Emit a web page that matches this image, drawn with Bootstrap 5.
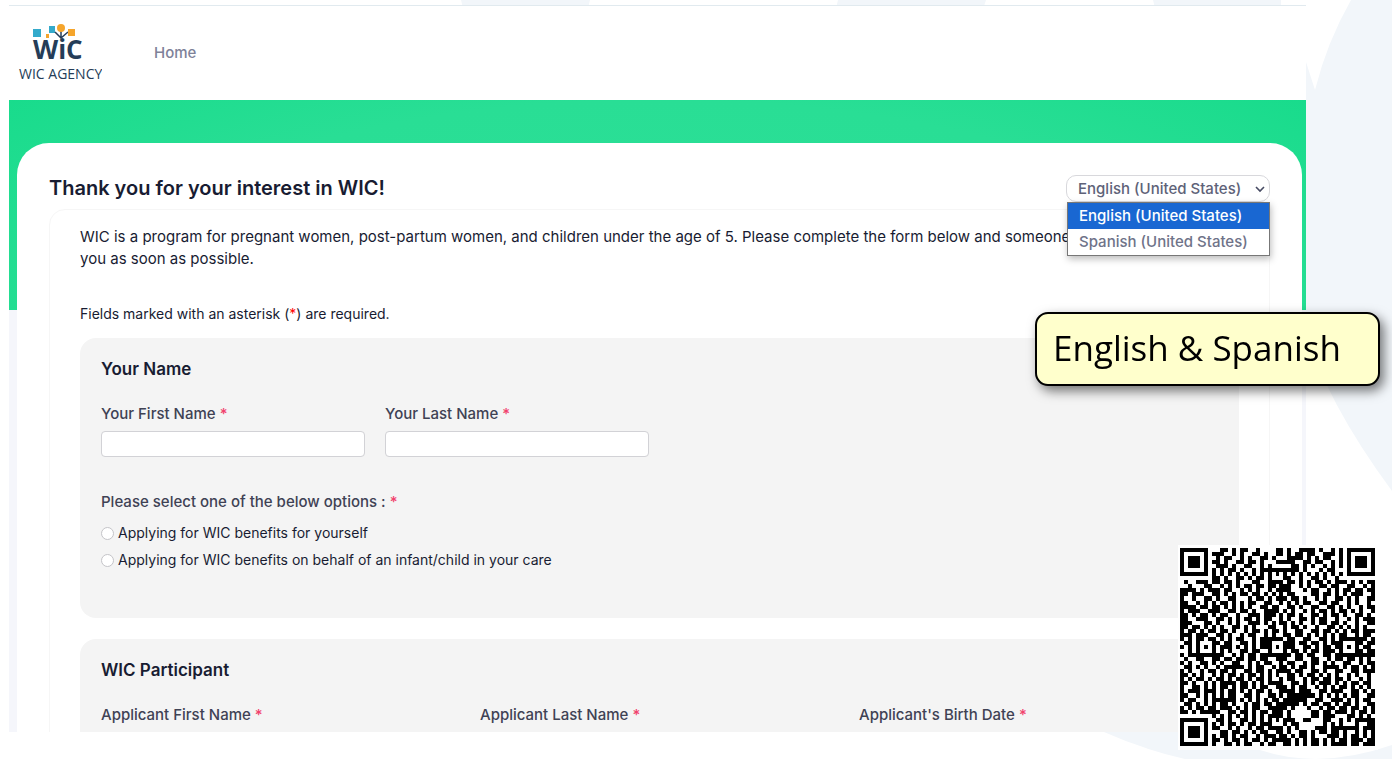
<!DOCTYPE html>
<html lang="en">
<head>
<meta charset="utf-8">
<meta name="viewport" content="width=device-width, initial-scale=1">
<title>WIC Agency</title>
<link href="https://cdn.jsdelivr.net/npm/bootstrap@5.3.0/dist/css/bootstrap.min.css" rel="stylesheet">
<style>
  body { font-family: Inter, "Liberation Sans", sans-serif; font-size: 15px; color: #181c32; background: #fff; min-height: 100vh; overflow: hidden; }
  .backdrop-art { position: fixed; inset: 0; width: 100%; height: 100%; z-index: -1; }
  .app-window { margin: 5px 86px 0 9px; height: calc(100vh - 32px); overflow: hidden; background: #f5f6fb; border-top: 1px solid #e1eaef; }
  .site-header { height: 94px; padding: 0 9px; gap: 52px; }
  .site-header a { color: #7e8299; font-weight: 500; }
  .hero { height: 210px; background: radial-gradient(ellipse 70% 150% at 50% 90%, #2de098 0%, #29de95 60%, #15db8a 100%); }
  .main-card { margin: -167px 4px 0 8px; padding: 32px; border-radius: 32px 32px 0 0; min-height: 700px; }
  h1 { font-size: 20px; font-weight: 600; line-height: 27px; }
  h2 { font-size: 17px; font-weight: 600; line-height: 20px; margin-bottom: 24px; }
  .lang-picker { width: 204px; }
  .lang-picker .form-select { height: 27px; padding: 0 11px; font-size: 15px; font-weight: 500; line-height: 24px; color: #5e6278; border-color: #d8d8dc; border-radius: 10px;
    background-image: url("data:image/svg+xml,%3Csvg xmlns='http://www.w3.org/2000/svg' viewBox='0 0 10 10'%3E%3Cpath d='M1 3l4 4 4-4' fill='none' stroke='%23474b63' stroke-width='1.6'/%3E%3C/svg%3E"); background-size: 10px; background-position: right 4px center; }
  .lang-menu { top: 27px; left: 1px; right: 0; border: 1px solid #777; box-shadow: 1px 3px 7px #0004; z-index: 2; font-weight: 500; color: #6f7389; line-height: 26px; }
  .lang-menu li { padding: 0 11px; }
  .lang-menu .chosen { background: #1967d2; color: #fff; }
  .panel { border: 1px solid #f6f6f6; border-radius: 16px; margin-top: 7px; padding: 16px 30px 30px; }
  .intro { line-height: 22px; margin-bottom: 34px; }
  .note { font-size: 14px; line-height: 20px; margin-bottom: 14px; }
  .note span { color: #f00; }
  .form-block { background: #f4f4f4; border-radius: 16px; padding: 21px; margin-bottom: 21px; }
  .form-block .form-label, legend { font-size: 15px; font-weight: 450; line-height: 22px; color: #3f4254; }
  .form-block .form-label { margin-bottom: 6px; }
  legend { margin-bottom: 10px; }
  .name-block { min-height: 280px; }
  .text-row { display: grid; grid-template-columns: 264px 264px; gap: 20px; margin-bottom: 34px; }
  .text-row .form-control { height: 26px; border-color: #d2d2d6; border-radius: 4px; }
  .three-up { --bs-gutter-x: 20px; }
  .req { color: #f1416c; }
  .choice { font-size: 14px; line-height: 20px; gap: 4px; margin-bottom: 7px; }
  .choice .form-check-input { width: 13px; height: 13px; margin: 0; border-color: #c4c4c8; }
  .callout-note { position: fixed; top: 312px; right: 12px; width: 345px; height: 74px; padding: 0 16px 4px; border: 2px solid #000; border-radius: 13px; background: #ffc; box-shadow: 4px 5px 12px #0008; color: #000; font: 35px "Open Sans", sans-serif; z-index: 5; }
  .qr-box { position: fixed; right: 14px; bottom: 9px; padding: 3px 3px 4px 2px; background: #fff; z-index: 5; line-height: 0; }
</style>
</head>
<body>
<svg class="backdrop-art" viewBox="0 0 1392 759" preserveAspectRatio="none" fill="#f2f6fa" aria-hidden="true">
  <path d="M461 0H590L587 12H464ZM838 0H986L982 12H835ZM1153 0H1281V12H1156Z"/>
  <path d="M1351 0Q1327 42 1315 90L1306 62V330Q1325 400 1392 491V0Z"/>
  <path d="M1104 732Q1142 749 1185 759H1392V745Q1320 770 1260 750L1235 732Z"/>
</svg>

<div class="app-window">
  <header class="site-header d-flex align-items-center bg-white">
    <svg width="84" height="62" viewBox="0 0 84 62" role="img" aria-label="WIC Agency">
      <rect x="15" y="7" width="8" height="8" fill="#34aacb"/>
      <rect x="31" y="4" width="6" height="7" fill="#34aacb"/>
      <rect x="28" y="12" width="3" height="4" fill="#f5a52c"/>
      <path d="M37 10l6 6 7-6M43 8v8" fill="none" stroke="#253d58" stroke-width="1.5"/>
      <circle cx="43" cy="6" r="4" fill="#f5a52c"/>
      <rect x="50" y="7" width="7" height="7" fill="#f5a52c"/>
      <text x="15" y="37" font-family="Open Sans, sans-serif" font-weight="700" font-size="26" fill="#253d58">WiC</text>
      <text x="1" y="57" font-family="Open Sans, sans-serif" font-size="14" fill="#253d58">WIC AGENCY</text>
    </svg>
    <nav><a class="text-decoration-none" href="#">Home</a></nav>
  </header>
  <div class="hero"></div>

  <main class="main-card bg-white position-relative">
    <div class="d-flex justify-content-between">
      <h1 class="m-0">Thank you for your interest in WIC!</h1>
      <div class="lang-picker position-relative">
        <select class="form-select" aria-label="Language">
          <option>English (United States)</option>
          <option>Spanish (United States)</option>
        </select>
        <ul class="lang-menu list-unstyled position-absolute bg-white m-0">
          <li class="chosen">English (United States)</li>
          <li>Spanish (United States)</li>
        </ul>
      </div>
    </div>
    <form class="panel">
      <p class="intro">WIC is a program for pregnant women, post-partum women, and children under the age of 5. Please complete the form below and someone from<br>you as soon as possible.</p>
      <p class="note">Fields marked with an asterisk (<span>*</span>) are required.</p>
      <section class="form-block name-block">
        <h2>Your Name</h2>
        <div class="text-row">
          <div><label class="form-label" for="first">Your First Name <span class="req">*</span></label><input class="form-control" id="first" type="text"></div>
          <div><label class="form-label" for="last">Your Last Name <span class="req">*</span></label><input class="form-control" id="last" type="text"></div>
        </div>
        <fieldset>
          <legend>Please select one of the below options : <span class="req">*</span></legend>
          <div class="choice d-flex align-items-center"><input class="form-check-input" type="radio" name="who" id="self"><label for="self">Applying for WIC benefits for yourself</label></div>
          <div class="choice d-flex align-items-center"><input class="form-check-input" type="radio" name="who" id="child"><label for="child">Applying for WIC benefits on behalf of an infant/child in your care</label></div>
        </fieldset>
      </section>
      <section class="form-block">
        <h2>WIC Participant</h2>
        <div class="row three-up">
          <div class="col-4"><label class="form-label" for="afirst">Applicant First Name <span class="req">*</span></label><input class="form-control" id="afirst" type="text"></div>
          <div class="col-4"><label class="form-label" for="alast">Applicant Last Name <span class="req">*</span></label><input class="form-control" id="alast" type="text"></div>
          <div class="col-4"><label class="form-label" for="birth">Applicant's Birth Date <span class="req">*</span></label><input class="form-control" id="birth" type="text"></div>
        </div>
      </section>
    </form>
  </main>
</div>

<aside class="callout-note d-flex align-items-center">English &amp; Spanish</aside>
<div class="qr-box">
  <svg id="qr" width="195" height="198" viewBox="0 0 49 49" preserveAspectRatio="none" shape-rendering="crispEdges" role="img" aria-label="QR code"></svg>
</div>

<script src="https://cdn.jsdelivr.net/npm/bootstrap@5.3.0/dist/js/bootstrap.bundle.min.js"></script>
<script>
  // 49 x 49 modules, one string per row
  const rows = [
    "#######...##.#.##..#....##.#..####.#..#.#.#######",
    "#.....#.###..#.#..##.#..##.#.##.##..###.#.#.....#",
    "#.###.#..#.##..#.#..##.#...####.#.#.##..#.#.###.#",
    "#.###.#.##.#..##.##.#...#####..##.##..#.#.#.###.#",
    "#.###.#..###.#..##..#.#.....##.#.#..#.#.#.#.###.#",
    "#.....#.#.#.##.#..#.##########.#...#.##...#.....#",
    "#######.#.#.#.#.#.#.#.#.#.#.#.#.#.#.#.#.#.#######",
    "........##.#..##.#.##.#...##..#..##.#..#.........",
    ".#..###.##.##.#...##..####.##.#.#.##.#.###.#.#.##",
    "..#...##..#.#.#.##.##.##.###..#.#..##.##..##..#.#",
    "####.#.###.##..#.#.#..#.####...#.##..#.#.##.##.##",
    "##.###..##.#.#.##.##.#.#.#.##....##.##.#.#.###..#",
    "#..#..##.#..##...#.##.#.###.##.#..#.#..##.#.#..##",
    "##..#.#.#.##.#.#.##..##..#.#.#.##..##.##..#.#..#.",
    "####.##.##.#.#.#.#..##.##..##.#..##..##.#.#..#.##",
    "#.###..###..##.##.#..####.#.#..#.#.##.#.##.#.#..#",
    "##.#.##.#.##..#..###.###.#.##.#..##.#.##.#..##.#.",
    "##..###..##.#.#.##.#.##..#.#..##.#.##..#..#.#.###",
    "###...##.#..#.#..###.#.#.##.#.#..#.##.##.#..#..##",
    "##.##.#.#.#..##.#.#...##..#.##.#..#..##.#.#.#.#..",
    "#.##.#.##.##.#..#.##.#.##.#..##..##.##.#.#.##.###",
    "###.###..##.#..#.##..#.#..##.##.#.#.#.#.##..#.##.",
    "#.#.##.##.#.#.##..#.######.##..##..##.#.#######.#",
    ".##.#...##.##..##.#.###...###.##.##.#.###...##.##",
    "#.#.#.#.#.###.#.#.#.###.#.###..##.#.##.##.#.#.##.",
    "..#.#...#.#.#..##.##..#...#.##.#.##.###.#...##.##",
    "#.#########..#.#.##.########.##.##..##.###########",
    ".#..##..##.##.##.##.##..###..##..##..#.##.##.#.#.",
    "#.#..##.#.#..##..#.#.##..#.##..#.##.#.#..##..#.##",
    ".##.#.#..#.#####.#.##..#.##.#.##.#..####.#.##.#.#",
    "#.#..#.##.##.#..##.##.#.####.##..##.#..##..##.###",
    "##.#.#..#.#.##.#.##.#.#.#..##.#.##.#.#.#..#.#..#.",
    "#.#.##.#.##.#.##.#.##.#..#.##..#.##.##.##.#..#.#.",
    "##.#..#.#.####.##.#.#.####..##.#.#.###.#.#.##.##.",
    "#..##.#.#.##.#.##.#.##..###.#.##..#.#.#.##.#.#.#.",
    "#.###.###.#.##.#.#.##.#..####.###..##.###..##.#.#",
    "##..#.#.#.#.##..##.#..##.#.#######.#.#.#.#.##..##",
    "#.##..#.######.#.#.#.#.##.######..##..###.#.#.##.",
    ".##.#.#.#.##.#..#.##.##.######.#.##.##.#.##.#..##",
    "#.#.##.##.###.#.#.##..#####.#...#..#.##.##.##.#.#",
    "##.#.#####..##.##.#.##.###.#.....##.##.###.#.##.#",
    "........#.#.#.#.#.#.#.####.#.....##.###...##.#.#.",
    "#######..##.#..##.#.#.#.#.###..##...##..#.#.#####",
    "#.....#.#.#.##.#.##.###...#.##......#.#.#...#..##",
    "#.###.#.##..#.#..#.##.####.#.#....###.#######.###",
    "#.###.#...##.##.#.#.##..##.#..##.#.##.##.#..#.#.#",
    "#.###.#.#.##.#.##..#.###.##.#.##.#...###.#.##.#.#",
    "#.....#.##.#.##.#.##.#.#####.#.#.##.#.#.##.###.##",
    "#######.#..##.#.##..#.##..##.#.#.##.#.####.##.###"
  ];
  let d = "";
  rows.forEach((row, y) => [...row].forEach((c, x) => { if (c === "#") d += `M${x} ${y}h1v1h-1z`; }));
  document.getElementById("qr").innerHTML = `<path d="${d}"/>`;
</script>
</body>
</html>
